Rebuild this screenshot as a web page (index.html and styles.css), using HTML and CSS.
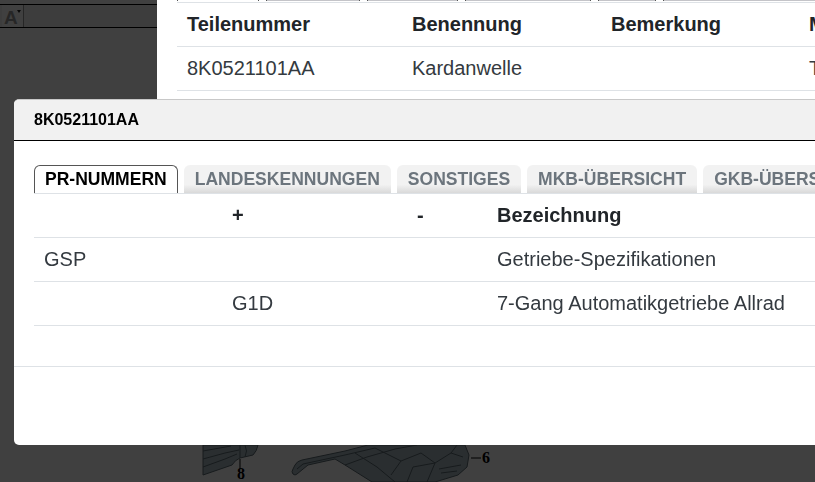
FILE: index.html
```html
<!DOCTYPE html>
<html lang="de">
<head>
    <meta charset="UTF-8">
    <meta name="viewport" content="width=device-width, initial-scale=1.0">
    <title>8K0521101AA</title>
    <link rel="stylesheet" href="styles.css">
</head>
<body>

<div class="page">
    <aside class="side">
        <div class="side-tools">
            <span class="font-btn">A<i class="caret"></i></span>
        </div>
    </aside>

    <main class="content">
        <div class="parts-wrap">
            <div class="top-strip">
                <span class="strip-cell first"></span>
                <span class="strip-cell w2"></span>
                <span class="strip-cell w3"></span>
                <span class="strip-cell w4"></span>
                <span class="strip-cell w5"></span>
                <span class="strip-cell w6"></span>
            </div>
            <table class="parts">
                <thead>
                    <tr>
                        <th class="c-nr">Teilenummer</th>
                        <th class="c-name">Benennung</th>
                        <th class="c-note">Bemerkung</th>
                        <th class="c-more">Menge</th>
                    </tr>
                </thead>
                <tbody>
                    <tr>
                        <td>8K0521101AA</td>
                        <td>Kardanwelle</td>
                        <td></td>
                        <td>Teil</td>
                    </tr>
                </tbody>
            </table>
        </div>

        <div class="drawing">
            <svg width="300" height="37" viewBox="0 0 300 37">
                <g class="part">
                    <path d="M8 0 H63 Q62 6 58 10 L45 13 Q40 15 37 20 L8 30 Z"/>
                    <path d="M98 29 Q96 27 98 24 L100 20 Q102 16 107 15 L150 6 L173 0 H270 L274 10 L272 22 L263 30 L240 37 H177 L150 20 L140 14 L113 20 L102 29 Q100 31 98 29 Z"/>
                </g>
                <g class="part-lines">
                    <path d="M8 6 L36 1 M8 14 L30 8 L44 5 M8 22 L30 14 L42 9 M45 0 V13 M50 0 Q53 6 50 12"/>
                    <path d="M102 24 L108 19 L150 10 L180 3 M150 20 L172 12 L200 4 L222 0"/>
                    <path d="M160 8 L182 22 L200 37 M180 3 L206 16 L226 8 M206 16 L196 30 M226 8 L240 18 L232 37"/>
                    <path d="M212 37 L218 22 L240 18 L256 8 L262 0 M244 24 L266 20 M246 28 L262 26 M256 8 L268 12"/>
                </g>
                <path class="lead" d="M45 14 V24 M276 13 H286"/>
                <text x="42" y="34" class="callout">8</text>
                <text x="287" y="18" class="callout">6</text>
            </svg>
        </div>
    </main>
</div>

<div class="overlay"></div>

<div class="modal">
    <div class="modal-head">8K0521101AA</div>
    <div class="modal-body">
        <ul class="tabs">
            <li class="tab active">PR-NUMMERN</li>
            <li class="tab">LANDESKENNUNGEN</li>
            <li class="tab">SONSTIGES</li>
            <li class="tab">MKB-ÜBERSICHT</li>
            <li class="tab">GKB-ÜBERSICHT</li>
        </ul>
        <table class="pr-table">
            <thead>
                <tr>
                    <th class="c-code"></th>
                    <th class="c-plus">+</th>
                    <th class="c-minus">-</th>
                    <th>Bezeichnung</th>
                </tr>
            </thead>
            <tbody>
                <tr>
                    <td>GSP</td>
                    <td></td>
                    <td></td>
                    <td>Getriebe-Spezifikationen</td>
                </tr>
                <tr>
                    <td></td>
                    <td>G1D</td>
                    <td></td>
                    <td>7-Gang Automatikgetriebe Allrad</td>
                </tr>
            </tbody>
        </table>
    </div>
    <div class="modal-foot"></div>
</div>

</body>
</html>
```

FILE: styles.css
```css
html, body {
    margin: 0;
    height: 100%;
    overflow: hidden;
}
body {
    font-family: "Liberation Sans", Arial, sans-serif;
    color: #212529;
    background-color: #fff;
}
.page {
    display: flex;
    width: 815px;
    height: 482px;
}
.side {
    width: 157px;
    flex-shrink: 0;
    padding-top: 4px;
    box-sizing: border-box;
}
.side-tools {
    height: 22px;
    background-color: #f4f4f4;
    border-top: 1px solid #000;
    border-bottom: 1px solid #000;
}
.font-btn {
    display: block;
    position: relative;
    width: 22px;
    height: 22px;
    margin-left: 2px;
    padding-left: 2px;
    box-sizing: border-box;
    background-color: #fff;
    border-right: 1px solid #999;
    color: #999;
    font-size: 19px;
    font-weight: bold;
    line-height: 25px;
}
.caret {
    position: absolute;
    top: 5px;
    right: 2px;
    border: 2px solid transparent;
    border-top: 3px solid #222;
}
.content {
    flex: 1;
    min-width: 0;
    overflow: hidden;
}
.parts-wrap {
    position: relative;
    z-index: 2;
    height: 100px;
    padding-left: 20px;
    background-color: #fff;
}
.top-strip {
    display: flex;
    gap: 7px;
    height: 2px;
    border-bottom: 1px solid #dee2e6;
}
.strip-cell {
    height: 1px;
    background-color: #c4c4c8;
    border-left: 1px solid #555;
    border-right: 1px solid #555;
    flex-shrink: 0;
}
.strip-cell.first {
    width: 80px;
    background-color: #fff;
}
.w2 { width: 92px; }
.w3 { width: 89px; }
.w4 { width: 124px; }
.w5 { width: 56px; }
.w6 { width: 160px; }
.parts {
    border-collapse: collapse;
    table-layout: fixed;
    width: 700px;
    font-size: 20px;
}
.parts th, .parts td {
    height: 43px;
    padding: 0 10px;
    text-align: left;
    white-space: nowrap;
    overflow: hidden;
    border-bottom: 1px solid #dee2e6;
}
.parts td, .pr-table td {
    color: #343a40;
}
.c-nr { width: 205px; }
.c-name { width: 179px; }
.c-note { width: 178px; }
.drawing {
    margin-top: 345px;
    margin-left: 38px;
    height: 37px;
}
.part {
    fill: #a6b8c0;
    stroke: #5c6a72;
    stroke-width: 1;
}
.part-lines {
    fill: none;
    stroke: #5c6a72;
    stroke-width: 1;
}
.lead {
    fill: none;
    stroke: #000;
    stroke-width: 1;
}
.callout {
    font-family: "Liberation Serif", serif;
    font-size: 16px;
    font-weight: bold;
    fill: #000;
}
.overlay {
    position: fixed;
    inset: 0;
    z-index: 1;
    background-color: rgba(0, 0, 0, 0.75);
}
.modal {
    position: fixed;
    top: 99px;
    left: 14px;
    z-index: 3;
    width: 900px;
    height: 346px;
    display: flex;
    flex-direction: column;
    box-sizing: border-box;
    overflow: hidden;
    background-color: #fff;
    border-top: 1px solid #c8c8c8;
    border-radius: 5px;
}
.modal-head {
    height: 40px;
    padding-left: 20px;
    background-color: #f1f1f1;
    border-bottom: 1px solid #000;
    color: #000;
    font-size: 16px;
    font-weight: bold;
    line-height: 39px;
}
.modal-body {
    height: 226px;
    padding: 24px 20px 0;
    box-sizing: border-box;
    border-bottom: 1px solid #dee2e6;
}
.modal-foot {
    flex: 1;
}
.tabs {
    display: flex;
    gap: 6px;
    height: 28px;
    margin: 0;
    padding: 0;
    list-style: none;
    white-space: nowrap;
    border-bottom: 1px solid #dee2e6;
}
.tab {
    height: 28px;
    padding: 0 11px;
    background: linear-gradient(to bottom, #f2f2f2 0, #f2f2f2 70%, #d9d9d9 100%);
    border-radius: 6px 6px 0 0;
    color: #6c757d;
    font-size: 17.55px;
    font-weight: bold;
    line-height: 28px;
}
.tab.active {
    padding: 0 10px;
    box-sizing: border-box;
    background: #fff;
    border: 1px solid #555;
    border-bottom: 0;
    color: #000;
    line-height: 26px;
}
.pr-table {
    border-collapse: collapse;
    table-layout: fixed;
    width: 860px;
    font-size: 20px;
}
.pr-table th, .pr-table td {
    height: 43px;
    padding: 0 10px;
    text-align: left;
    border-bottom: 1px solid #dee2e6;
}
.c-code { width: 168px; }
.c-plus { width: 165px; }
.c-minus { width: 60px; }
```
